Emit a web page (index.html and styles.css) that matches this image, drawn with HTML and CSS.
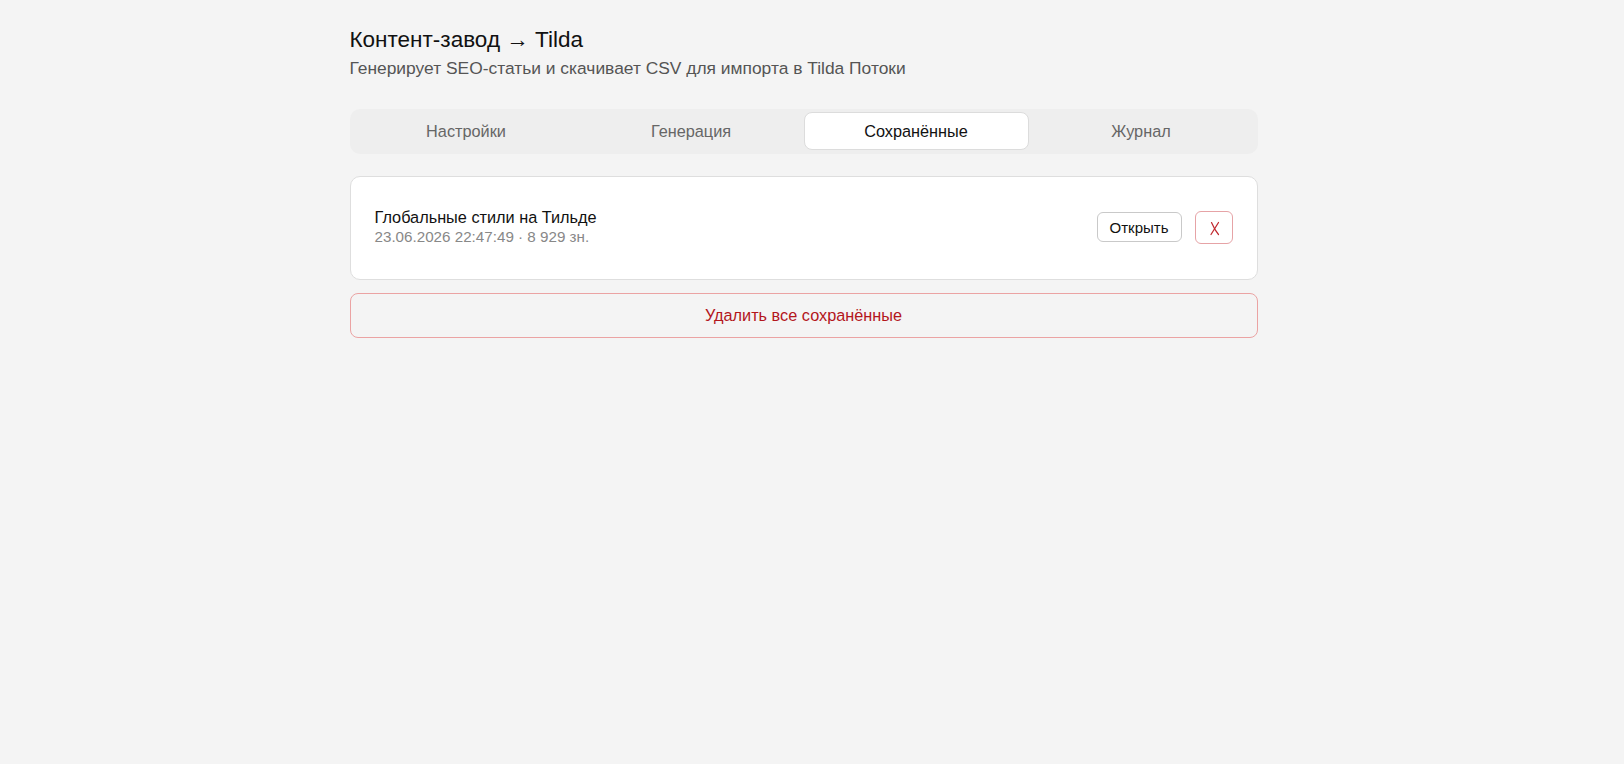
FILE: index.html
```html
<!DOCTYPE html>
<html lang="ru">
<head>
<meta charset="utf-8">
<title>Контент-завод → Tilda</title>
<link rel="stylesheet" href="styles.css">
</head>
<body>
<div class="page">
  <header class="header">
    <h1 class="title">Контент-завод → Tilda</h1>
    <p class="subtitle">Генерирует SEO-статьи и скачивает CSV для импорта в Tilda Потоки</p>
  </header>
  <nav class="tabs">
    <button class="tab">Настройки</button>
    <button class="tab">Генерация</button>
    <button class="tab tab-active">Сохранённые</button>
    <button class="tab">Журнал</button>
  </nav>
  <section class="card">
    <div class="item">
      <div class="item-info">
        <div class="item-title">Глобальные стили на Тильде</div>
        <div class="item-meta">23.06.2026 22:47:49 · 8 929 зн.</div>
      </div>
      <div class="item-actions">
        <button class="btn">Открыть</button>
        <button class="btn btn-del" aria-label="Удалить"><svg class="x-icon" width="10" height="15" viewBox="0 0 10 15" fill="none" stroke="currentColor" stroke-width="1.2" stroke-linecap="round"><path d="M1.5 1.5 C3 5 5.5 10 8.5 13.5"/><path d="M8.5 1.5 C6 5.5 3.5 9.5 1 13.5"/></svg></button>
      </div>
    </div>
  </section>
  <button class="btn-clear">Удалить все сохранённые</button>
</div>
</body>
</html>
```
FILE: styles.css
```css
* { box-sizing: border-box; }
html, body { margin: 0; }
body {
  background: #f4f4f4;
  font-family: "Liberation Sans", Arial, sans-serif;
  color: #111;
  padding-right: 17px;
}
.page {
  max-width: 940px;
  margin: 0 auto;
  padding: 27px 16px;
}
.header { margin-bottom: 32px; }
.title {
  margin: 0 0 7px;
  font-size: 22.5px;
  font-weight: 400;
  line-height: 25px;
  color: #111;
}
.subtitle {
  margin: 0;
  font-size: 17.4px;
  line-height: 18px;
  color: #555;
}
.tabs {
  display: grid;
  grid-template-columns: repeat(4, 1fr);
  background: #eeeeee;
  border-radius: 10px;
  padding: 3px 4px 4px;
  margin-bottom: 22px;
}
.tab {
  font-family: inherit;
  font-size: 16.3px;
  line-height: 18px;
  padding: 9px 0;
  border: 1px solid transparent;
  background: transparent;
  color: #666;
  border-radius: 8px;
  cursor: pointer;
}
.tab-active {
  background: #fff;
  border-color: #dcdcdc;
  color: #111;
}
.card {
  background: #fff;
  border: 1px solid #dedede;
  border-radius: 10px;
  padding: 30px 24px 32px;
  margin-bottom: 13px;
}
.item {
  display: flex;
  align-items: center;
  justify-content: space-between;
}
.item-title {
  font-size: 16.3px;
  line-height: 20px;
  color: #111;
}
.item-meta {
  font-size: 15.2px;
  line-height: 20px;
  color: #888;
}
.item-actions {
  display: flex;
  gap: 13px;
  align-items: center;
}
.btn {
  font-family: inherit;
  font-size: 15px;
  height: 30px;
  padding: 0 12px;
  background: #fff;
  border: 1px solid #c9c9c9;
  border-radius: 6px;
  color: #111;
}
.btn-del {
  display: flex;
  align-items: center;
  justify-content: center;
  width: 38px;
  height: 33px;
  padding: 0 0 0 2px;
  border-color: #e6a3a6;
  color: #c0272d;
}
.x-icon { display: block; margin-top: 3px; }
.btn-clear {
  display: block;
  width: 100%;
  height: 45px;
  font-family: inherit;
  font-size: 16.3px;
  background: transparent;
  border: 1px solid #eba3a3;
  border-radius: 8px;
  color: #b3161c;
}
```
